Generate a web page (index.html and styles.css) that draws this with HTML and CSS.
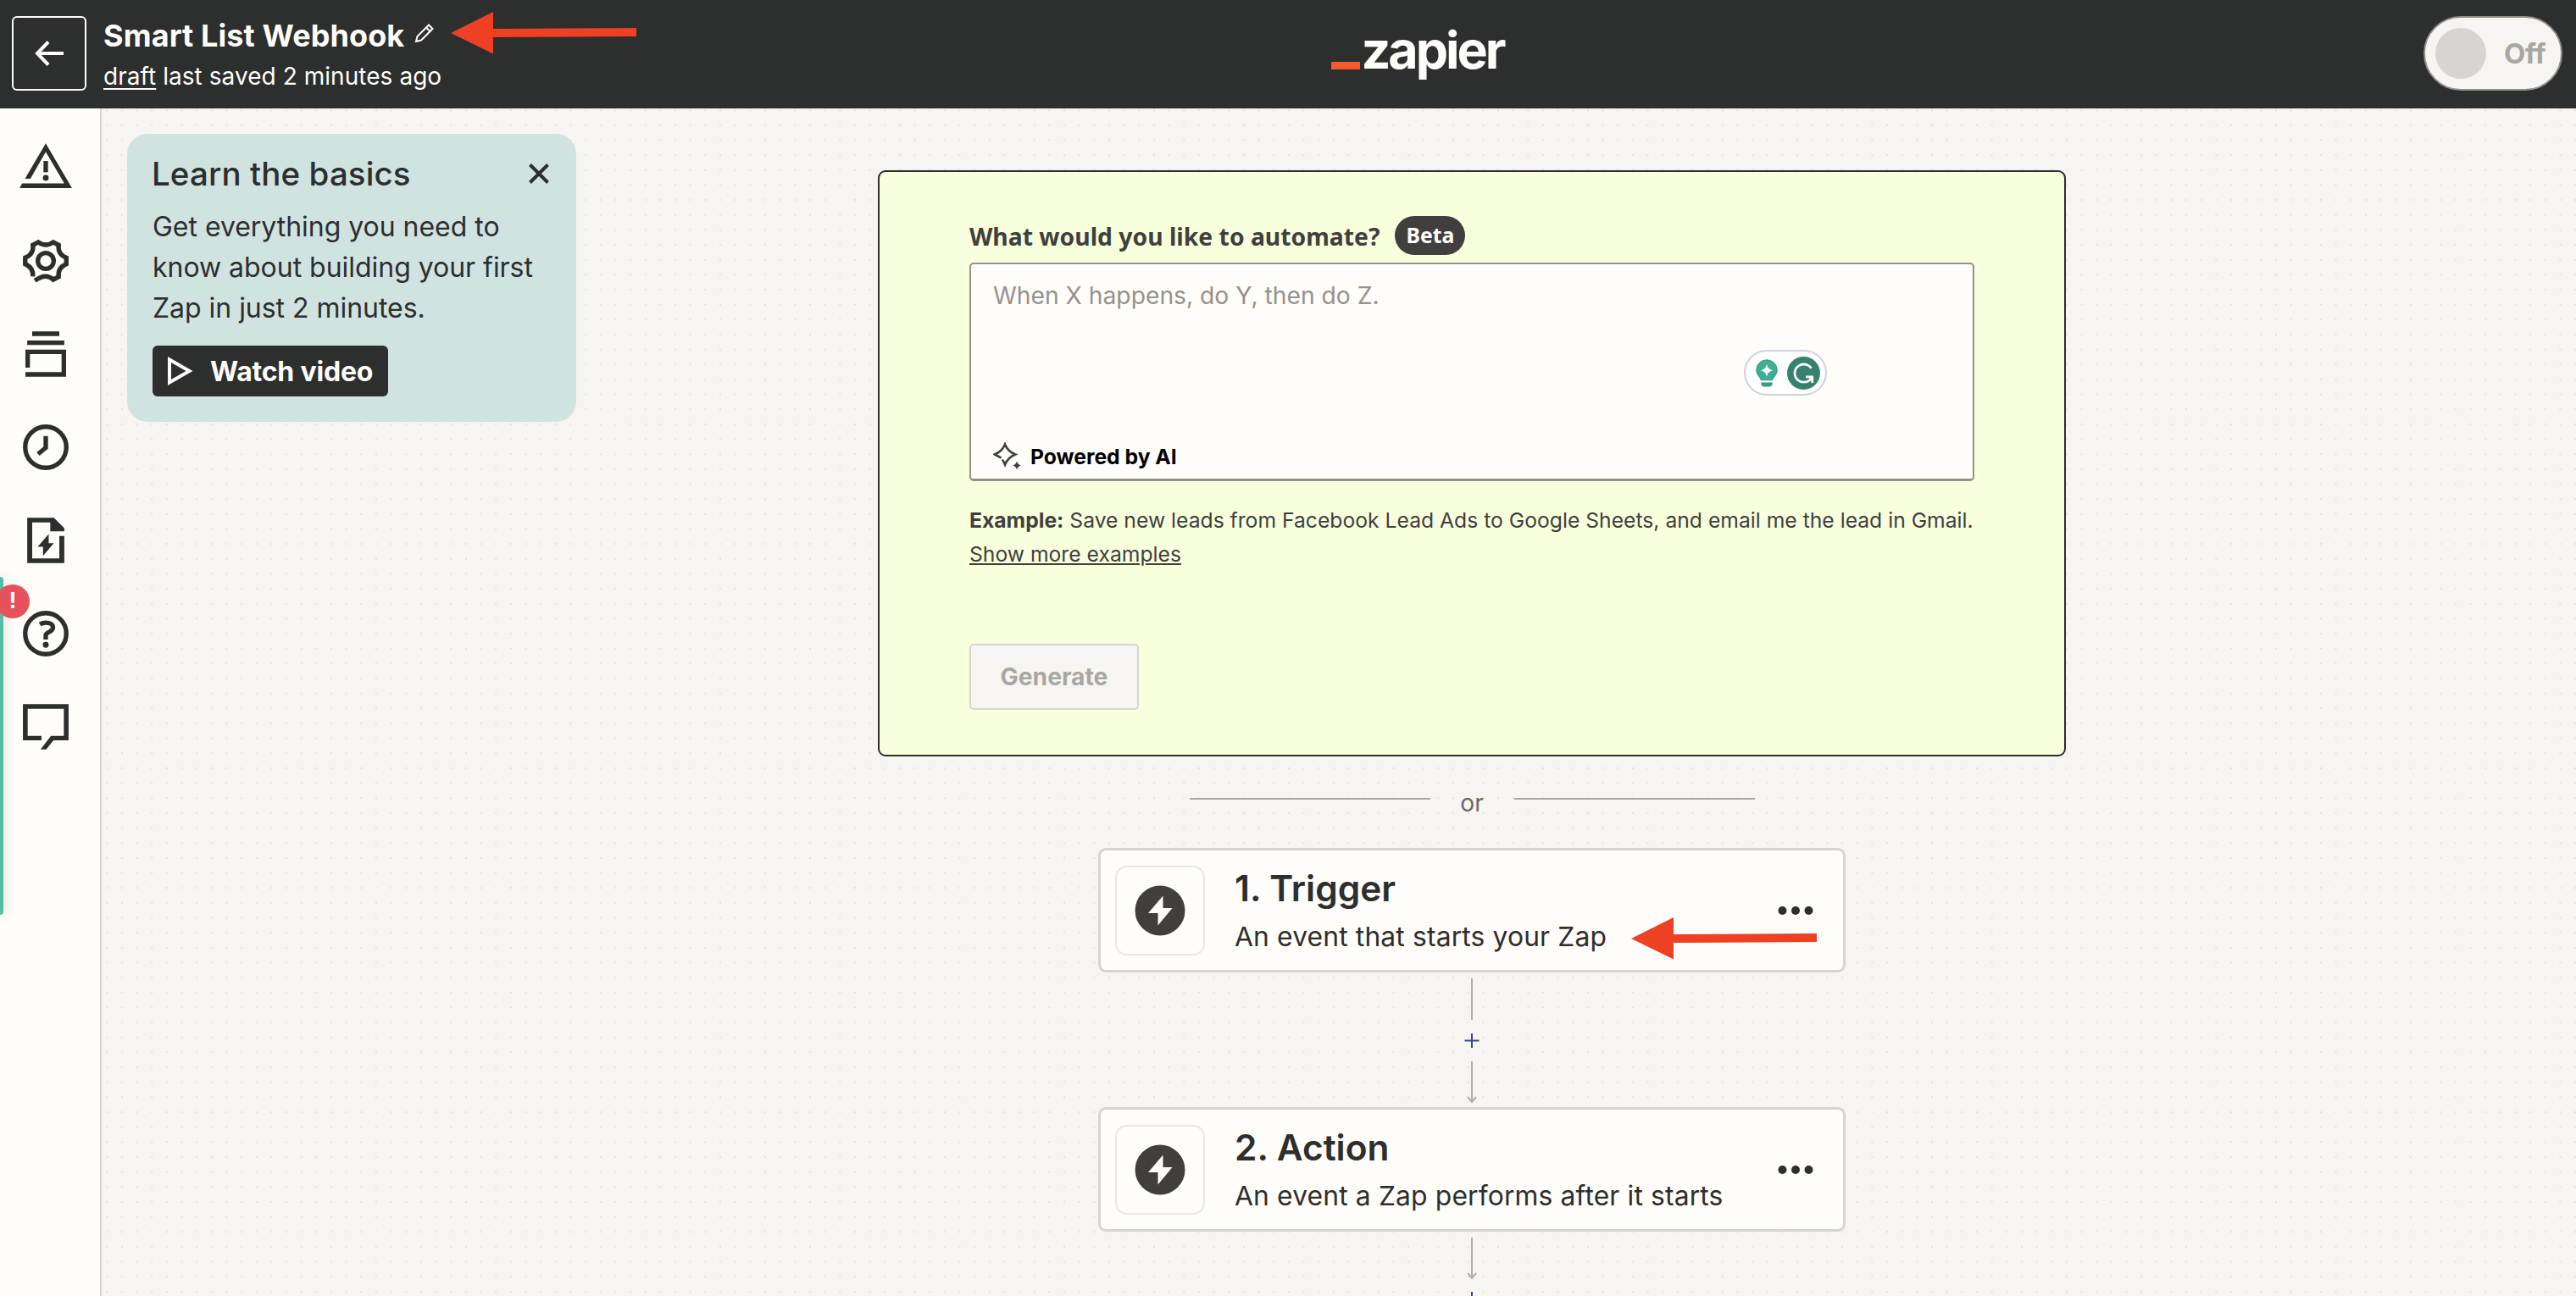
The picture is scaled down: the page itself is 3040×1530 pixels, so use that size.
FILE: index.html
```
<!DOCTYPE html>
<html lang="en">
<head>
  <meta charset="UTF-8" />
  <meta name="viewport" content="width=device-width, initial-scale=1.0" />
  <title>Smart List Webhook | Zapier</title>
  <link rel="stylesheet" href="styles.css">
</head>
<body>

  <!-- Top bar -->
  <header class="topbar">
    <div class="topbar-left">
      <button class="back-btn" aria-label="Back">
        <svg width="36" height="32" viewBox="0 0 36 32" fill="none" stroke="#fffdf9" stroke-width="4"><path d="M35 16H4M17 2.5L4 16L17 29.5" /></svg>
      </button>
      <div class="zap-info">
        <div class="zap-title">
          <h1>Smart List Webhook</h1>
          <svg class="pencil" width="24" height="24" viewBox="0 0 24 24" fill="none" stroke="#fffdf9" stroke-width="2"><path d="M2 22L3.5 16L17 2.5L21.5 7L8 20.5L2 22ZM14 5.5L18.5 10" /></svg>
        </div>
        <p class="saved"><u>draft</u> last saved 2 minutes ago</p>
      </div>
    </div>
    <div class="logo"><span class="logo-bar"></span><span class="logo-text">zapier</span></div>
    <div class="toggle"><span class="knob"></span><span class="toggle-text">Off</span></div>
  </header>

  <div class="main">
    <!-- Sidebar icons -->
    <nav class="sidebar">
      <svg class="nav-icon" viewBox="0 0 24 24"><path d="M12 1.2L23.6 21H.4L1.6 18.9H20.2L12 5L5.2 16.9H2.8Z" /><path d="M11 9H13V14H11Z" /><circle cx="12" cy="16.5" r="1.3" /></svg>
      <svg class="nav-icon line" viewBox="0 0 24 24"><path d="M7.2 20.8Q12 17.2 15.3 20.3L17.7 19Q17.2 15 21.1 13.4V10.6Q17.2 9 17.7 5L15.3 3.7Q12 6.1 8.7 3.7L6.3 5Q6.8 9 2.9 10.6V13.4Q6.6 15 6.3 18.9" /><circle cx="12" cy="12" r="3.5" /></svg>
      <svg class="nav-icon" viewBox="0 0 24 24"><path d="M6 2H18V4H6ZM3.8 6H20.2V8H3.8ZM3 10H21V22H3V20H19V12H5V18H3Z" /></svg>
      <svg class="nav-icon line" viewBox="0 0 24 24"><circle cx="12" cy="12" r="9.1" /><path d="M12 7V12.2L8.6 15" /></svg>
      <svg class="nav-icon" viewBox="0 0 24 24"><path d="M3.8 2H15.6L20.2 6.6V8H14V4H6V20H18V10H20.2V22H3.8Z" /><path d="M13.3 9.2L8.4 14.8H10.8V18.8L15.6 13.2H13.3Z" /></svg>
      <svg class="nav-icon line" viewBox="0 0 24 24"><circle cx="12" cy="12" r="9.1" /><path d="M9.4 7.9Q10.6 7.2 12 7.2C14 7.2 15.2 8 15.2 9.4C15.2 11.4 12 11.2 12 12.8V14.6" /><circle class="dot" cx="12" cy="17" r="1.3" /></svg>
      <svg class="nav-icon" viewBox="0 0 24 24"><path d="M1.9 2H22.1V18H15.4L12.2 22H9.7L14.3 16H20V4H4V16H10.1V18H1.9Z" /></svg>
    </nav>

    <main class="canvas">
      <svg class="dots" width="100%" height="100%">
        <pattern id="grid" x="5.2" y="1.2" width="17.654" height="17.654" patternUnits="userSpaceOnUse">
          <circle cx="1" cy="1" r="1" fill="#dddbd7" />
        </pattern>
        <rect width="100%" height="100%" fill="url(#grid)" />
      </svg>

      <!-- Learn card -->
      <aside class="learn">
        <div class="learn-head">
          <h2>Learn the basics</h2>
          <svg width="24" height="24" viewBox="0 0 24 24" stroke="#2d2e2e" stroke-width="4"><path d="M1.5 1.5L22.5 22.5M22.5 1.5L1.5 22.5" /></svg>
        </div>
        <p>Get everything you need to know about building your first Zap in just 2 minutes.</p>
        <button class="watch-btn">
          <svg width="30" height="34" viewBox="0 0 30 34" fill="none" stroke="#fffdf9" stroke-width="4"><path d="M2 3.5V30.5L25.5 17Z" /></svg>
          Watch video
        </button>
      </aside>

      <div class="flow">
        <!-- AI prompt -->
        <section class="ai-panel">
          <div class="ai-label"><span class="ai-question">What would you like to automate?</span><span class="beta">Beta</span></div>
          <div class="prompt">
            <p class="placeholder">When X happens, do Y, then do Z.</p>
            <div class="powered">
              <svg width="34" height="34" viewBox="0 0 34 34"><path fill="none" stroke="#413f3d" stroke-width="2.6" d="M9.5 18.5L1.8 14.5C8 12 11.500 9 14 2.500C16.500 9 20 12 26.200 14.500C20 17 16.500 20 14 26.500C13 24 12 22 10.800 20.500" /><path fill="#413f3d" d="M28 22.500C29 25.500 30 26.500 33 27.500C30 28.500 29 29.500 28 32.500C27 29.500 26 28.500 23 27.500C26 26.500 27 25.500 28 22.500Z" /></svg>
              Powered by AI
            </div>
            <div class="grammar">
              <svg width="26" height="33" viewBox="0 0 26 33"><path fill="#3fae93" stroke="#3a9a83" stroke-width="1" d="M13 .8A12.300 12.300 0 0 0 .7 13C.7 18 4.500 20 6.300 24.800H19.700C21.500 20 25.300 18 25.300 13A12.300 12.300 0 0 0 13 .8Z" /><path fill="#fff" d="M13 6C14.500 10.800 15.700 11.800 20.300 13.300C15.700 14.800 14.500 15.800 13 20.600C11.500 15.800 10.300 14.800 5.700 13.300C10.300 11.800 11.500 10.800 13 6Z" /><path fill="#3a9a83" d="M6 27.500H20Q19.500 32.500 16 32.500H10Q6.500 32.500 6 27.500Z" /></svg>
              <svg width="39" height="39" viewBox="0 0 39 39"><circle cx="19.500" cy="19.500" r="19.500" fill="#37816f" /><path fill="none" stroke="#fff" stroke-width="2.800" d="M28.500 13.800A10.600 10.600 0 1 0 28.300 25.700L29 23.700M22 23.800H29.700V31" /></svg>
            </div>
          </div>
          <p class="example"><b>Example:</b> Save new leads from Facebook Lead Ads to Google Sheets, and email me the lead in Gmail.<br><a>Show more examples</a></p>
          <button class="generate">Generate</button>
        </section>

        <div class="or"><span class="rule"></span><span class="or-text">or</span><span class="rule"></span></div>

        <!-- Steps -->
        <section class="step">
          <div class="step-icon">
            <svg width="60" height="60" viewBox="0 0 60 60"><circle cx="30" cy="30" r="29.500" fill="#413f3d" /><path fill="#fffdf9" d="M33.500 12.500L16 33H27.500V47.500L44.500 27H33.500Z" /></svg>
          </div>
          <div class="step-text">
            <h3>1. Trigger</h3>
            <p>An event that starts your Zap</p>
          </div>
          <svg class="more" width="42" height="12" viewBox="0 0 42 12"><circle cx="5.500" cy="6" r="5" /><circle cx="21" cy="6" r="5" /><circle cx="36.500" cy="6" r="5" /></svg>
        </section>
        <svg class="connector" width="24" height="159" viewBox="0 0 24 159">
          <path d="M12 7V56M12 105V153M7 147L12 153L17 147" />
          <path class="plus" d="M12 72V89M3.500 80.500H20.500" />
        </svg>
        <section class="step">
          <div class="step-icon">
            <svg width="60" height="60" viewBox="0 0 60 60"><circle cx="30" cy="30" r="29.500" fill="#413f3d" /><path fill="#fffdf9" d="M33.500 12.500L16 33H27.500V47.500L44.500 27H33.500Z" /></svg>
          </div>
          <div class="step-text">
            <h3>2. Action</h3>
            <p>An event a Zap performs after it starts</p>
          </div>
          <svg class="more" width="42" height="12" viewBox="0 0 42 12"><circle cx="5.500" cy="6" r="5" /><circle cx="21" cy="6" r="5" /><circle cx="36.500" cy="6" r="5" /></svg>
        </section>
        <svg class="connector" width="24" height="160" viewBox="0 0 24 160">
          <path d="M12 7V55M7 49L12 55L17 49" />
          <path class="plus" d="M12 71V88M3.500 79.500H20.500" />
        </svg>
      </div>
    </main>
  </div>

  <!-- Left edge tab with alert -->
  <div class="edge-tab"></div>
  <div class="alert">!</div>

  <!-- Red pointers -->
  <svg class="pointer pointer-title" width="220" height="50" viewBox="0 0 220 50"><path d="M0 25L50 0V20L219 19V29L50 30V49.500Z" /></svg>
  <svg class="pointer pointer-trigger" width="220" height="50" viewBox="0 0 220 50"><path d="M0 25L50 0V20L219 19V29L50 30V49.500Z" /></svg>

</body>
</html>
```

FILE: styles.css
```
* {
  box-sizing: border-box;
}

body {
  margin: 0;
  height: 1530px;
  overflow: hidden;
  font-family: Inter, 'Liberation Sans', sans-serif;
  background: #f7f5f2;
  color: #2d2e2e;
}

h1, h2, h3, p {
  margin: 0;
}

svg {
  display: block;
  flex-shrink: 0;
}

button {
  font-family: inherit;
}

/* top bar */
.topbar {
  display: grid;
  grid-template-columns: 1fr auto 1fr;
  height: 128px;
  padding: 19px 16px 0 14px;
  background: #2d2e2e;
  color: #fffdf9;
}

.topbar-left {
  display: flex;
  gap: 20px;
}

.back-btn {
  display: flex;
  align-items: center;
  justify-content: center;
  width: 88px;
  height: 88px;
  border: 2px solid #fffdf9;
  border-radius: 6px;
  background: none;
}

.zap-title {
  display: flex;
  gap: 12px;
}

.zap-title h1 {
  font-size: 36px;
  line-height: 46px;
  letter-spacing: 0.1px;
}

.pencil {
  margin-top: 8px;
}

.saved {
  margin-top: 5px;
  font-size: 28px;
  line-height: 40px;
  letter-spacing: 0.05px;
}

.saved u {
  text-underline-offset: 4px;
}

.logo {
  display: flex;
  gap: 2px;
  margin-left: 307px;
}

.logo-bar {
  width: 34px;
  height: 9px;
  margin-top: 54px;
  background: #f15a29;
}

.logo-text {
  font-size: 61px;
  font-weight: 700;
  line-height: 80px;
  letter-spacing: -3.1px;
}

.toggle {
  display: flex;
  align-items: center;
  justify-self: end;
  width: 164px;
  height: 88px;
  padding-left: 12px;
  border: 2px solid #93908c;
  border-radius: 44px;
  background: #f7f5f2;
}

.knob {
  width: 60px;
  height: 60px;
  border-radius: 50%;
  background: #d7d5d2;
}

.toggle-text {
  margin-left: 21px;
  font-size: 33px;
  font-weight: 700;
  letter-spacing: -0.4px;
  color: #a8a7a3;
}

/* layout */
.main {
  display: flex;
  height: 1402px;
}

.sidebar {
  display: flex;
  flex-direction: column;
  align-items: center;
  gap: 46px;
  width: 120px;
  padding: 38px 10px 0 0;
  border-right: 2px solid #d7d5d2;
  background: #fffdf9;
}

.nav-icon {
  width: 64px;
  height: 64px;
  fill: #2d2e2e;
}

.nav-icon.line {
  fill: none;
  stroke: #2d2e2e;
  stroke-width: 2;
}

.nav-icon .dot {
  fill: #2d2e2e;
  stroke: none;
}

.canvas {
  position: relative;
  flex: 1;
  padding-left: 314px;
  overflow: hidden;
}

.dots {
  position: absolute;
  top: 0;
  left: 0;
}

/* learn card */
.learn {
  position: absolute;
  top: 30px;
  left: 30px;
  width: 530px;
  height: 340px;
  padding: 23px 32px 0 30px;
  border-radius: 24px;
  background: #d0e3e0;
}

.learn-head {
  display: flex;
  align-items: center;
  justify-content: space-between;
}

.learn h2 {
  margin-left: -1px;
  font-size: 38.5px;
  font-weight: 500;
  line-height: 48px;
  letter-spacing: 0.1px;
}

.learn p {
  margin-top: 15px;
  font-size: 32px;
  line-height: 48px;
  letter-spacing: -0.03px;
}

.watch-btn {
  display: flex;
  align-items: center;
  gap: 20px;
  width: 278px;
  height: 60px;
  margin-top: 20px;
  padding: 0 0 0 18px;
  border: none;
  border-radius: 6px;
  background: #2d2e2e;
  color: #fffdf9;
  font-size: 32px;
  font-weight: 700;
  letter-spacing: -0.2px;
  white-space: nowrap;
}

/* flow column */
.flow {
  position: relative;
  display: flex;
  flex-direction: column;
  align-items: center;
  padding-top: 73px;
}

.ai-panel {
  width: 1402px;
  height: 692px;
  padding: 52px 106px;
  border: 2px solid #2d2e2e;
  border-radius: 9px;
  background: #f7ffdd;
  color: #413f3d;
}

.ai-label {
  display: flex;
  align-items: center;
  gap: 18px;
  height: 46px;
  font-family: 'Noto Sans', sans-serif;
  font-size: 28.3px;
  font-weight: 700;
  line-height: 46px;
}

.ai-question {
  padding-top: 1px;
}

.beta {
  width: 83px;
  height: 46px;
  border-radius: 23px;
  background: #413f3d;
  color: #fff;
  font-size: 24.7px;
  line-height: 45px;
  text-align: center;
}

.prompt {
  position: relative;
  display: flex;
  flex-direction: column;
  justify-content: space-between;
  width: 1186px;
  height: 258px;
  margin-top: 9px;
  padding: 16px 26px 10px;
  border: 2px solid #95928e;
  border-bottom-width: 3px;
  border-radius: 5px;
  background: #fffdf9;
}

.placeholder {
  color: #95928e;
  font-size: 28.24px;
  line-height: 42px;
}

.powered {
  display: flex;
  align-items: center;
  gap: 10px;
  height: 32px;
  color: #000;
  font-size: 24.7px;
  font-weight: 700;
}

/* writing assistant pill */
.grammar {
  position: absolute;
  top: 101px;
  left: 912px;
  display: flex;
  align-items: center;
  gap: 11px;
  width: 98px;
  height: 54px;
  padding-left: 12px;
  border: 2px solid #d0d0de;
  border-radius: 27px;
  background: #fff;
}

.example {
  margin-top: 27px;
  font-size: 24.7px;
  line-height: 39.5px;
  white-space: nowrap;
}

.example a {
  text-decoration: underline;
}

.generate {
  width: 200px;
  height: 78px;
  margin-top: 86px;
  border: 2px solid #d7d5d2;
  border-radius: 5px;
  background: #f7f5f2;
  color: #a8a7a3;
  font-size: 28.24px;
  font-weight: 700;
}

.or {
  display: flex;
  align-items: center;
  margin: 33px 0;
  font-size: 28.24px;
  line-height: 42px;
  color: #6b6a68;
}

.or-text {
  width: 99px;
  padding-top: 1px;
  margin-bottom: -1px;
  text-align: center;
}

.rule {
  width: 284px;
  height: 2px;
  margin-bottom: 8px;
  background: #aaa6a3;
}

/* steps */
.step {
  display: flex;
  width: 882px;
  height: 147px;
  padding: 18px 35px 0 17px;
  border: 3px solid #d7d5d2;
  border-radius: 9px;
  background: #fffdf9;
}

.step-icon {
  display: flex;
  align-items: center;
  justify-content: center;
  width: 106px;
  height: 106px;
  border: 2px solid #e8e7e6;
  border-radius: 14px;
}

.step-text {
  flex: 1;
  margin-left: 35px;
}

.step-text h3 {
  font-size: 42.4px;
  font-weight: 600;
  line-height: 54px;
}

.step-text p {
  margin-top: 6px;
  font-size: 31.8px;
  line-height: 48px;
  letter-spacing: 0.15px;
}

.more {
  margin-top: 47px;
  fill: #2d2e2e;
}

.connector {
  fill: none;
  stroke: #b0aeab;
  stroke-width: 2;
}

.connector .plus {
  stroke: #3d4592;
}

/* edge tab and alert */
.edge-tab {
  position: absolute;
  top: 681px;
  left: 0;
  width: 4px;
  height: 399px;
  border-radius: 0 4px 4px 0;
  background: #53bfa2;
  box-shadow: 0 0 14px rgba(40, 40, 70, 0.3);
}

.alert {
  position: absolute;
  top: 690px;
  left: -5px;
  width: 40px;
  height: 40px;
  border-radius: 50%;
  background: #e5525b;
  color: #fff;
  font-size: 25px;
  font-weight: 700;
  line-height: 39px;
  text-align: center;
}

/* pointers */
.pointer {
  position: absolute;
  fill: #ee4023;
}

.pointer-title {
  top: 14px;
  left: 532px;
}

.pointer-trigger {
  top: 1083px;
  left: 1925px;
}
```
